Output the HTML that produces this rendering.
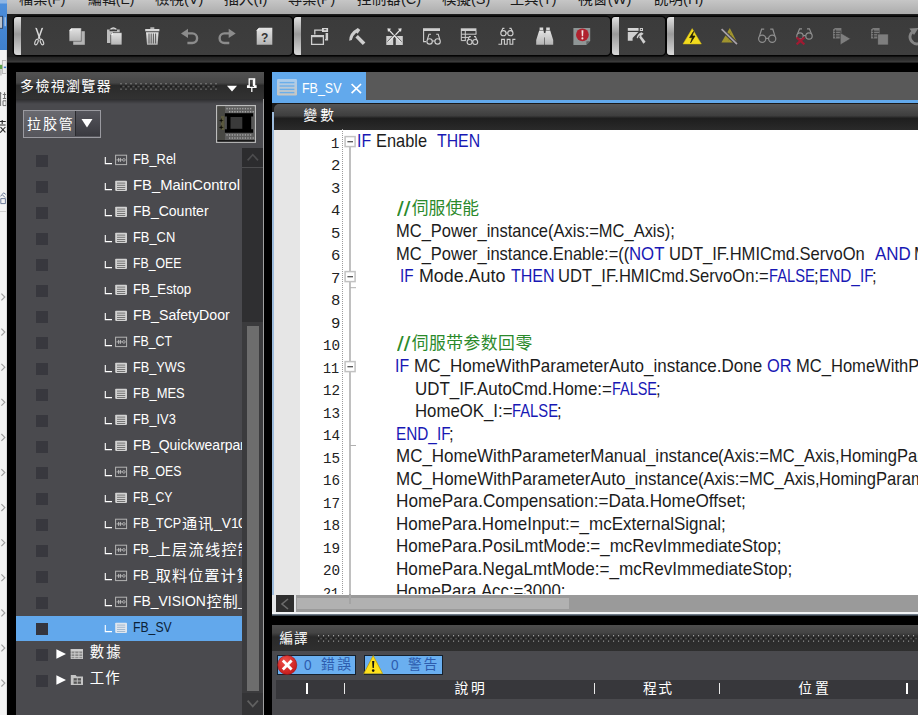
<!DOCTYPE html>
<html><head><meta charset="utf-8"><title>FB_SV</title>
<style>
html,body{margin:0;padding:0;background:#000;}
body{width:918px;height:715px;position:relative;overflow:hidden;font-family:"Liberation Sans","Noto Sans CJK TC",sans-serif;}
.a{position:absolute;}
.t{position:absolute;white-space:pre;display:block;}
.clip{position:absolute;left:0;top:0;width:918px;height:715px;}
.tb{position:absolute;top:17px;height:38px;background:linear-gradient(#3b3b3b,#3e3e3e);border-radius:4px;box-shadow:0 0 0 1.5px #040404;}
.grip{position:absolute;left:0;top:0;width:7px;height:38px;border-radius:3px 0 0 3px;background:linear-gradient(#e0e0e0,#9a9a9a 45%,#d8d8d8);}
.cb{position:absolute;left:36px;width:11px;height:11px;background:#333338;}
.ic{position:absolute;}
</style></head><body>
<!-- left strip of other window -->
<div class="a" style="left:0;top:0;width:7px;height:50px;background:linear-gradient(#4d8fdc,#3f80cc)"></div>
<div class="a" style="left:0;top:50px;width:7px;height:665px;background:#f3f3f3"></div>
<svg class="ic" style="left:0;top:0" width="8" height="715">
<rect x="0" y="0" width="7" height="3.5" fill="#8fb6e4"/>
<rect x="-1" y="16.3" width="3.6" height="12" fill="#b9c2cc" stroke="#2c4468" stroke-width="0.9"/>
<rect x="4.6" y="17.2" width="1.1" height="9" fill="#c9d6e6"/>
<rect x="2.4" y="60.5" width="4" height="13" fill="#ececec" stroke="#b4b4b4" stroke-width="0.9"/>
<rect x="0" y="64.8" width="2.2" height="4.4" fill="#5fa24a"/><rect x="3.8" y="66.6" width="2.6" height="1.5" fill="#3f78c6"/>
<rect x="0" y="69.5" width="1.8" height="6" fill="#c8c8c8"/>
<path d="M0 93.5 H1.4 M0.6 92 V106 M2.8 94.5 H6.4 M4.6 92.2 V98 M2.8 98.5 H6.4 M3 100.8 H6.2 V105.6 H3 Z" stroke="#707070" stroke-width="1" fill="none"/>
<path d="M0 121.5 H5.8 M2.2 120 V124 M0 125 H5.6 M0.5 127.2 L5.4 132.4 M5.4 127 L0.2 132.6" stroke="#2a2a2a" stroke-width="1.1" fill="none"/>
<path d="M0.5 196.4 L3.6 192.8 L5.8 194.4 M2.6 195 L5.2 197.6 M0.8 198.6 H5.4 V203.6 H0.8 Z" stroke="#5e6e90" stroke-width="0.9" fill="none"/>
<rect x="0" y="211" width="6.4" height="1" fill="#cfcfcf"/>
<path d="M1.4 293.6 L4.8 297 L1.4 300.4" stroke="#a0a0a0" stroke-width="1.2" fill="none"/>
<path d="M1.4 328.70000000000005 L4.8 332.1 L1.4 335.5" stroke="#a0a0a0" stroke-width="1.2" fill="none"/>
<path d="M1.4 363.80000000000007 L4.8 367.20000000000005 L1.4 370.6" stroke="#a0a0a0" stroke-width="1.2" fill="none"/>
<path d="M1.4 398.9000000000001 L4.8 402.30000000000007 L1.4 405.70000000000005" stroke="#a0a0a0" stroke-width="1.2" fill="none"/>
<path d="M1.4 434.0000000000001 L4.8 437.4000000000001 L1.4 440.80000000000007" stroke="#a0a0a0" stroke-width="1.2" fill="none"/>
<path d="M1.4 469.10000000000014 L4.8 472.5000000000001 L1.4 475.9000000000001" stroke="#a0a0a0" stroke-width="1.2" fill="none"/>
<path d="M1.4 504.20000000000016 L4.8 507.60000000000014 L1.4 511.0000000000001" stroke="#a0a0a0" stroke-width="1.2" fill="none"/>
<path d="M1.4 539.3000000000002 L4.8 542.7000000000002 L1.4 546.1000000000001" stroke="#a0a0a0" stroke-width="1.2" fill="none"/>
<path d="M1.4 574.4000000000002 L4.8 577.8000000000002 L1.4 581.2000000000002" stroke="#a0a0a0" stroke-width="1.2" fill="none"/>
<path d="M1.4 609.5000000000002 L4.8 612.9000000000002 L1.4 616.3000000000002" stroke="#a0a0a0" stroke-width="1.2" fill="none"/>
<path d="M1.4 644.6000000000003 L4.8 648.0000000000002 L1.4 651.4000000000002" stroke="#a0a0a0" stroke-width="1.2" fill="none"/>
<path d="M1.4 679.7000000000003 L4.8 683.1000000000003 L1.4 686.5000000000002" stroke="#a0a0a0" stroke-width="1.2" fill="none"/>
<rect x="6.2" y="50" width="0.8" height="665" fill="#d8d8d8"/>
</svg>
<!-- menu bar -->
<div class="a" style="left:7px;top:0;width:911px;height:13.5px;background:linear-gradient(#c6c6c6,#acacac)"></div>
<div class="clip" style="clip-path:inset(0 0 701.5px 7px)"><span class="t" style='left:19.34px;top:-12px;height:21px;line-height:21px;font-size:15px;color:#1a1a1a;transform:scaleX(0.9465);transform-origin:0 50%;'>檔案(F)</span>
<span class="t" style='left:88.28px;top:-12px;height:21px;line-height:21px;font-size:15px;color:#1a1a1a;transform:scaleX(0.9274);transform-origin:0 50%;'>編輯(E)</span>
<span class="t" style='left:155.32px;top:-12px;height:21px;line-height:21px;font-size:15px;color:#1a1a1a;transform:scaleX(0.9671);transform-origin:0 50%;'>檢視(V)</span>
<span class="t" style='left:224.31px;top:-12px;height:21px;line-height:21px;font-size:15px;color:#1a1a1a;transform:scaleX(0.9862);transform-origin:0 50%;'>插入(I)</span>
<span class="t" style='left:288.34px;top:-12px;height:21px;line-height:21px;font-size:15px;color:#1a1a1a;transform:scaleX(0.9465);transform-origin:0 50%;'>專案(P)</span>
<span class="t" style='left:357.29px;top:-12px;height:21px;line-height:21px;font-size:15px;color:#1a1a1a;transform:scaleX(0.9756);transform-origin:0 50%;'>控制器(C)</span>
<span class="t" style='left:442.32px;top:-12px;height:21px;line-height:21px;font-size:15px;color:#1a1a1a;transform:scaleX(0.9671);transform-origin:0 50%;'>模擬(S)</span>
<span class="t" style='left:510.34px;top:-12px;height:21px;line-height:21px;font-size:15px;color:#1a1a1a;transform:scaleX(0.9465);transform-origin:0 50%;'>工具(T)</span>
<span class="t" style='left:578.30px;top:-12px;height:21px;line-height:21px;font-size:15px;color:#1a1a1a;transform:scaleX(0.9890);transform-origin:0 50%;'>視窗(W)</span>
<span class="t" style='left:654.29px;top:-12px;height:21px;line-height:21px;font-size:15px;color:#1a1a1a;transform:scaleX(0.9684);transform-origin:0 50%;'>說明(H)</span></div>
<!-- toolbar zone -->
<div class="a" style="left:7px;top:13.5px;width:911px;height:43px;background:#1e1e1e"></div>
<div class="a" style="left:7px;top:56.6px;width:911px;height:6px;background:linear-gradient(#262626,#2e2e2e 50%,#3a3a3a 75%,#161616)"></div>
<div class="tb" style="left:14px;width:278px"><div class="grip"></div></div>
<div class="tb" style="left:294px;width:316px"><div class="grip"></div></div>
<div class="tb" style="left:612px;width:53px"><div class="grip"></div></div>
<div class="tb" style="left:667px;width:260px"><div class="grip"></div></div>
<svg class="ic" style="left:0;top:0" width="918" height="70" viewBox="0 0 918 70">
<defs>
<linearGradient id="lg" x1="0" y1="0" x2="0" y2="1"><stop offset="0" stop-color="#e4e4e4"/><stop offset="1" stop-color="#b4b4b4"/></linearGradient>
</defs>
<!-- scissors -->
<path d="M35.2 27.8 L36.9 27.9 L40.6 38.4 L39.2 39 Z" fill="#d8d8d8"/>
<path d="M43.2 27.8 L41.5 27.9 L37.8 38.4 L39.2 39 Z" fill="#d8d8d8"/>
<g stroke="#d2d2d2" fill="none" stroke-width="1.15">
<ellipse cx="36.5" cy="42" rx="1.45" ry="3" transform="rotate(22 36.5 42)"/>
<ellipse cx="41.9" cy="42" rx="1.45" ry="3" transform="rotate(-22 41.9 42)"/>
</g>
<!-- copy -->
<path d="M73.2 31.2 H84.8 V44.8 H73.2 Z" fill="#b4b4b4"/>
<path d="M71.8 27.9 H81.3 V41.3 H69.1 V30.6 Z" fill="url(#lg)" stroke="#3b3b3b" stroke-width="0.5"/>
<path d="M69.1 30.6 L71.8 30.6 L71.8 27.9 Z" fill="#fafafa"/>
<!-- paste -->
<path d="M107 29.5 H119.7 V43 H107 Z" fill="#bdbdbd"/>
<path d="M110.5 29.3 Q113.3 26.6 116.3 29.3" stroke="#d8d8d8" stroke-width="1.3" fill="none"/>
<path d="M109.6 29.8 H117 V31.2 H109.6 Z" fill="#3b3b3b"/>
<path d="M113 32.6 H122 V45 H110.7 V35 Z" fill="url(#lg)" stroke="#3b3b3b" stroke-width="0.7"/>
<path d="M110.7 35 L113 35 L113 32.6 Z" fill="#f4f4f4"/>
<!-- trash -->
<path d="M150.3 27.4 H154.3 V28.8 H150.3 Z" fill="#d0d0d0"/>
<path d="M145.2 29 H159.4 V31.3 H145.2 Z" fill="#d8d8d8"/>
<path d="M146 32.3 H158.6 L157.6 44.8 H147 Z" fill="url(#lg)"/>
<g stroke="#4a4a4a" stroke-width="0.9"><path d="M149 33.5 V43.5"/><path d="M151.2 33.5 V43.5"/><path d="M153.4 33.5 V43.5"/><path d="M155.6 33.5 V43.5"/></g>
<!-- undo -->
<path d="M187 33.4 H192.3 A4.8 4.8 0 0 1 192.3 43 H187.4" fill="none" stroke="#8c8c8c" stroke-width="2.4"/>
<path d="M181 33.4 L188 28.7 V38.1 Z" fill="#8c8c8c"/>
<!-- redo -->
<path d="M229.7 33.4 H224.4 A4.8 4.8 0 0 0 224.4 43 H229.3" fill="none" stroke="#8c8c8c" stroke-width="2.4"/>
<path d="M235.7 33.4 L228.7 28.7 V38.1 Z" fill="#8c8c8c"/>
<!-- help page -->
<path d="M259.2 27.8 H272.3 V44.8 H256.7 V30.3 Z" fill="url(#lg)"/>
<path d="M256.7 30.3 L259.2 30.3 L259.2 27.8 Z" fill="#f8f8f8"/>
<text x="264.6" y="41.6" font-family="Liberation Sans, sans-serif" font-weight="bold" font-size="12" fill="#333" text-anchor="middle">?</text>
<!-- windows icon -->
<path d="M311.6 35.6 H323.4 V44.4 H311.6 Z" fill="none" stroke="#cfcfcf" stroke-width="1.3"/>
<path d="M311 35 H324 V37.2 H311 Z" fill="#cfcfcf"/>
<path d="M314.8 34.4 V30.2 H322" fill="none" stroke="#cfcfcf" stroke-width="1.3"/>
<path d="M322 28 H328.1 V32 H322 Z" fill="#d6d6d6"/><path d="M323.8 29.2 H326.4 V30.2 H323.8 Z" fill="#444"/>
<path d="M325.6 33 H328.1 V40.4 H325 V39 H325.6 Z" fill="#cfcfcf"/>
<!-- hammer -->
<path d="M349.2 40.8 Q348.8 33 357.8 28 L360.3 29.9 L357.6 33.8 L356.2 32.8 Q352.6 35.8 351.8 40 Z" fill="#cfcfcf"/>
<path d="M355.4 37.4 L357.9 35 L365.4 42.4 L362.8 45 Z" fill="#cfcfcf"/>
<!-- cross arrows -->
<path d="M386.3 36 H393.2 V45 H386.3 Z M395.8 36 H402.8 V45 H395.8 Z" fill="#cfcfcf"/>
<g stroke="#e2e2e2" stroke-width="1.3" fill="none"><path d="M388.5 29.5 L400.5 42"/><path d="M400.5 29.5 L388.5 42"/></g>
<g stroke="#3b3b3b" stroke-width="0.7" fill="none"><path d="M389.8 29.2 L401.6 41.6"/><path d="M399.2 29.2 L387.4 41.6"/></g>
<path d="M387.4 28.2 L391.2 28.8 L388 32 Z M401.6 28.2 L397.8 28.8 L401 32 Z" fill="#e2e2e2"/>
<!-- window + glasses -->
<path d="M423 28.2 H440 V31 H423 Z" fill="#cfcfcf"/>
<path d="M423.6 31 V41.6 H426" stroke="#cfcfcf" stroke-width="1.1" fill="none"/>
<g fill="none" stroke="#cfcfcf" stroke-width="1.1"><circle cx="429.6" cy="41.4" r="2.7"/><circle cx="437.6" cy="41.4" r="2.7"/><path d="M432.3 41 H434.9"/><path d="M427.4 39.5 L429 34.2 H431"/><path d="M439.8 39.5 L438.2 34.2 H436.2"/></g>
<!-- table + glasses -->
<path d="M460.8 28.3 H476.4 V31 H460.8 Z" fill="#cfcfcf"/>
<g stroke="#cfcfcf" stroke-width="1" fill="none"><path d="M461.3 31 V40.6 H465.8"/><path d="M461.3 34.2 H476.4"/><path d="M461.3 37.4 H469"/><path d="M465.3 31 V40.6"/><path d="M476 31 V34.2"/></g>
<g fill="none" stroke="#cfcfcf" stroke-width="1.1"><circle cx="469.6" cy="42" r="2.5"/><circle cx="475.2" cy="42" r="2.5"/><path d="M468 40 L469.4 36.6 H470.8"/><path d="M476.8 40 L475.4 36.6 H474"/></g>
<!-- glasses + wave -->
<g fill="none" stroke="#cfcfcf" stroke-width="1.1"><circle cx="503.4" cy="33.2" r="2.6"/><circle cx="510.4" cy="33.2" r="2.6"/><path d="M506 33 H507.8"/><path d="M501.4 31.4 L502.8 28.4 H504.4"/><path d="M512.4 31.4 L511 28.4 H509.4"/>
<path d="M498.4 44.2 H501.6 V39.4 H504.4 V44.2 H507.2 V39.4 H510 V44.2 H512.8 V39.4 H515.4"/></g>
<!-- binoculars -->
<path d="M539.6 27.6 H543.2 V30 H539.6 Z M546.2 27.6 H549.8 V30 H546.2 Z" fill="#d8d8d8"/>
<path d="M539.2 30.6 H543.6 L544.4 36 V44.8 H536.2 V40 Z M545.8 30.6 H550.2 L553.2 40 V44.8 H545 V36 Z" fill="url(#lg)"/>
<path d="M543.4 33 H546 V37.4 H543.4 Z" fill="#d0d0d0"/>
<!-- error page -->
<path d="M573.4 28 H590.2 V41 L586.4 45 H573.4 Z" fill="#8f9696"/>
<path d="M586.4 45 V41.2 H590.2 Z" fill="#5e6464"/>
<circle cx="582.4" cy="34.8" r="6.4" fill="#b0222e"/>
<path d="M581.5 30.2 H583.4 L583.1 36.2 H581.8 Z" fill="#f2e6e6"/><circle cx="582.4" cy="38.4" r="1.05" fill="#f2e6e6"/>
<!-- build window -->
<path d="M627.8 28 H638.6 V30.8 H627.8 Z" fill="#d6d6d6"/>
<path d="M627.8 32 H638.4 L632.6 38 V40.8 H627.8 Z" fill="#cfcfcf"/>
<path d="M639.8 28 H643 V31 H639.8 Z" fill="#cfcfcf"/><path d="M640.8 29 H642 V30 H640.8 Z" fill="#3b3b3b"/>
<path d="M636.6 37.6 Q637.8 33.6 641.6 32.2 L643.6 33.8 L640.6 36.2 L639.6 35.6 Q638.2 36.6 637.8 38.6 Z" fill="#cfcfcf"/>
<path d="M639 37 L640.8 35.4 L645.6 41.8 L643.4 43.8 Z" fill="#cfcfcf"/>
<!-- yellow warning bolt -->
<path d="M692.2 28.6 L701.4 44 H683 Z" fill="#f2dc1e" stroke="#d0b416" stroke-width="0.5" stroke-linejoin="round"/>
<path d="M693.6 31.4 L689.6 37.6 H692.4 L690.6 42.8 L695 36 H692.2 Z" fill="#1c1a08" stroke="#1c1a08" stroke-width="0.7"/>
<!-- dim warning slashed -->
<path d="M729.8 28 L737.2 42.6 H721.4 Z" fill="#a0942e"/>
<path d="M730.6 31.4 L727.6 36.6 H729.8 L728.4 41 L731.8 35.4 H729.6 Z" fill="#6e6620"/>
<path d="M721.6 29.2 L737 44.1" stroke="#3b3b3b" stroke-width="3.6"/>
<path d="M721.6 29.2 L737 44.1" stroke="#a8a2aa" stroke-width="1.7"/>
<!-- glasses gray -->
<g fill="none" stroke="#8e8e8e" stroke-width="1.2"><circle cx="762.2" cy="38.8" r="3.6"/><circle cx="772.2" cy="38.8" r="3.6"/><path d="M765.8 38.4 H768.6"/><path d="M759.4 36.4 L761.6 29.2 H764.2"/><path d="M775 36.4 L772.8 29.2 H770.2"/></g>
<!-- glasses w/ red x -->
<g fill="none" stroke="#8e8e8e" stroke-width="1.2"><circle cx="800" cy="36" r="3.2"/><circle cx="809" cy="36" r="3.2"/><path d="M803.2 35.6 H805.8"/><path d="M797.6 33.8 L799.6 28.8 H802"/><path d="M811.4 33.8 L809.4 28.8 H807"/></g>
<path d="M796.6 37.4 L804.4 44.4 M804.4 37.4 L796.6 44.4" stroke="#a01a32" stroke-width="2.2"/>
<!-- play with doc -->
<path d="M833 29.6 L835 28 H841.4 V38.4 H833 Z" fill="#7a7a7a"/>
<g stroke="#3b3b3b" stroke-width="0.9"><path d="M833.6 31.2 H841 M833.6 33.6 H841 M833.6 36 H841 M835.6 29.6 V38.4"/></g>
<path d="M840.2 32.6 L850.6 38.8 L840.2 45 Z" fill="#7e7e7e" stroke="#3b3b3b" stroke-width="0.7"/>
<!-- stop with doc -->
<path d="M871 29.6 L873 28 H879.6 V38.4 H871 Z" fill="#7a7a7a"/>
<g stroke="#3b3b3b" stroke-width="0.9"><path d="M871.6 31.2 H879.2 M871.6 33.6 H879.2 M871.6 36 H879.2 M873.6 29.6 V38.4"/></g>
<path d="M877.6 34 H888.4 V45 H877.6 Z" fill="#7e7e7e" stroke="#3b3b3b" stroke-width="0.7"/>
<!-- refresh -->
<path d="M912.4 31.8 A6.9 6.9 0 0 0 919.5 43.4" fill="none" stroke="#858585" stroke-width="3"/>
<path d="M909.4 28.4 L918.4 28 L914 35 Z" fill="#858585"/>
</svg>

<!-- left panel -->
<div class="a" style="left:16px;top:72px;width:248px;height:27px;background:linear-gradient(#525252,#464646 40%,#2a2a2a 50%,#323232)"></div>
<div class="a" style="left:16px;top:99px;width:248px;height:616px;background:linear-gradient(#2c2c2e,#4a4a4e 5px)"></div>
<svg class="ic" style="left:120px;top:83px" width="97" height="6.9"><defs><pattern id="d1" width="5" height="5.6" patternUnits="userSpaceOnUse"><rect x="0" y="0" width="2" height="1.3" fill="#6c6c6c"/><rect x="2.5" y="2.8" width="2" height="1.3" fill="#5c5c5c"/><rect x="0" y="2.8" width="2" height="1.3" fill="#1c1c1c"/></pattern></defs><rect width="97" height="6.9" fill="url(#d1)"/></svg>
<svg class="ic" style="left:226px;top:85px" width="12" height="8"><path d="M1 0.8 L11 0.8 L6 6.4 Z" fill="#fff"/></svg>
<svg class="ic" style="left:246px;top:78px" width="12" height="15"><path d="M3.2 1 H8.6 V8 H10 V9.4 H1.6 V8 H3.2 Z" fill="none" stroke="#fff" stroke-width="1.3"/><path d="M7.6 1.4 V8" stroke="#fff" stroke-width="1.6"/><path d="M5.8 9.4 V14" stroke="#fff" stroke-width="1.3"/></svg>

<!-- dropdown -->
<div class="a" style="left:23px;top:110px;width:77.5px;height:27.5px;background:linear-gradient(#6a6a70,#55555b);box-shadow:inset 0 0 0 1px #9a9aa0"></div>
<div class="a" style="left:75px;top:111px;width:24px;height:25px;background:linear-gradient(#55555c,#3a3a40);border-left:1px solid #2a2a2e"></div>
<svg class="ic" style="left:81px;top:118px" width="12" height="10"><path d="M0.5 1 L11.5 1 L6 9.5 Z" fill="#fff"/></svg>

<svg class="ic" style="left:216px;top:105px" width="41" height="39" viewBox="0 0 41 39">
<rect x="0.65" y="0.65" width="38.7" height="36.6" fill="#505052" stroke="#bcbcbc" stroke-width="1.3"/>
<rect x="1.3" y="1.3" width="7.7" height="34" fill="#484844"/>
<rect x="5" y="11" width="3.4" height="14" fill="#6c6838" opacity="0.5"/>
<rect x="9" y="1.6" width="29.5" height="6.8" fill="#5e5e5e"/>
<rect x="10.40" y="2.9" width="1.3" height="1.5" fill="#a4a4a4"/><rect x="13.02" y="2.9" width="1.3" height="1.5" fill="#a4a4a4"/><rect x="15.64" y="2.9" width="1.3" height="1.5" fill="#a4a4a4"/><rect x="18.26" y="2.9" width="1.3" height="1.5" fill="#a4a4a4"/><rect x="20.88" y="2.9" width="1.3" height="1.5" fill="#a4a4a4"/><rect x="23.50" y="2.9" width="1.3" height="1.5" fill="#a4a4a4"/><rect x="26.12" y="2.9" width="1.3" height="1.5" fill="#a4a4a4"/><rect x="28.74" y="2.9" width="1.3" height="1.5" fill="#a4a4a4"/><rect x="31.36" y="2.9" width="1.3" height="1.5" fill="#a4a4a4"/><rect x="33.98" y="2.9" width="1.3" height="1.5" fill="#a4a4a4"/><rect x="13.00" y="6.0" width="1.3" height="1.5" fill="#a4a4a4"/><rect x="15.62" y="6.0" width="1.3" height="1.5" fill="#a4a4a4"/><rect x="18.24" y="6.0" width="1.3" height="1.5" fill="#a4a4a4"/><rect x="20.86" y="6.0" width="1.3" height="1.5" fill="#a4a4a4"/><rect x="23.48" y="6.0" width="1.3" height="1.5" fill="#a4a4a4"/><rect x="26.10" y="6.0" width="1.3" height="1.5" fill="#a4a4a4"/><rect x="28.72" y="6.0" width="1.3" height="1.5" fill="#a4a4a4"/><rect x="31.34" y="6.0" width="1.3" height="1.5" fill="#a4a4a4"/><rect x="33.96" y="6.0" width="1.3" height="1.5" fill="#a4a4a4"/><rect x="36.58" y="6.0" width="1.3" height="1.5" fill="#a4a4a4"/>
<rect x="9" y="27.6" width="29.5" height="7.6" fill="#5e5e5e"/>
<rect x="10.40" y="29.2" width="1.3" height="1.5" fill="#a4a4a4"/><rect x="13.02" y="29.2" width="1.3" height="1.5" fill="#a4a4a4"/><rect x="15.64" y="29.2" width="1.3" height="1.5" fill="#a4a4a4"/><rect x="18.26" y="29.2" width="1.3" height="1.5" fill="#a4a4a4"/><rect x="20.88" y="29.2" width="1.3" height="1.5" fill="#a4a4a4"/><rect x="23.50" y="29.2" width="1.3" height="1.5" fill="#a4a4a4"/><rect x="26.12" y="29.2" width="1.3" height="1.5" fill="#a4a4a4"/><rect x="28.74" y="29.2" width="1.3" height="1.5" fill="#a4a4a4"/><rect x="31.36" y="29.2" width="1.3" height="1.5" fill="#a4a4a4"/><rect x="33.98" y="29.2" width="1.3" height="1.5" fill="#a4a4a4"/><rect x="13.00" y="32.3" width="1.3" height="1.5" fill="#a4a4a4"/><rect x="15.62" y="32.3" width="1.3" height="1.5" fill="#a4a4a4"/><rect x="18.24" y="32.3" width="1.3" height="1.5" fill="#a4a4a4"/><rect x="20.86" y="32.3" width="1.3" height="1.5" fill="#a4a4a4"/><rect x="23.48" y="32.3" width="1.3" height="1.5" fill="#a4a4a4"/><rect x="26.10" y="32.3" width="1.3" height="1.5" fill="#a4a4a4"/><rect x="28.72" y="32.3" width="1.3" height="1.5" fill="#a4a4a4"/><rect x="31.34" y="32.3" width="1.3" height="1.5" fill="#a4a4a4"/><rect x="33.96" y="32.3" width="1.3" height="1.5" fill="#a4a4a4"/><rect x="36.58" y="32.3" width="1.3" height="1.5" fill="#a4a4a4"/>
<rect x="35" y="11.4" width="3.5" height="13" fill="#585858"/>
<path d="M8.9 8.2 H37 V11.4 H35.2 V24.3 H37 V27.8 H8.9 V24.3 H10.9 V11.4 H8.9 Z" fill="#000"/>
<rect x="14.5" y="12" width="11.8" height="11.8" fill="#3a3a3a"/>
<rect x="1.3" y="35.2" width="37.4" height="1.4" fill="#0a0a0a"/>
<path d="M5.2 13.0 L5.8 14.9 L7.7 15.5 L5.8 16.1 L5.2 18.0 L4.6000000000000005 16.1 L2.7 15.5 L4.6000000000000005 14.9 Z" fill="#0c0c06"/><path d="M5.2 19.8 L5.8 21.7 L7.7 22.3 L5.8 22.900000000000002 L5.2 24.8 L4.6000000000000005 22.900000000000002 L2.7 22.3 L4.6000000000000005 21.7 Z" fill="#0c0c06"/>
</svg>

<!-- tree -->
<div class="a" style="left:16px;top:616px;width:226px;height:25px;background:#62a8ec"></div>
<div class="a" style="left:36px;top:155px;width:12px;height:12px;background:#38383e"></div>
<div class="a" style="left:36px;top:181px;width:12px;height:12px;background:#38383e"></div>
<div class="a" style="left:36px;top:207px;width:12px;height:12px;background:#38383e"></div>
<div class="a" style="left:36px;top:233px;width:12px;height:12px;background:#38383e"></div>
<div class="a" style="left:36px;top:259px;width:12px;height:12px;background:#38383e"></div>
<div class="a" style="left:36px;top:285px;width:12px;height:12px;background:#38383e"></div>
<div class="a" style="left:36px;top:311px;width:12px;height:12px;background:#38383e"></div>
<div class="a" style="left:36px;top:337px;width:12px;height:12px;background:#38383e"></div>
<div class="a" style="left:36px;top:363px;width:12px;height:12px;background:#38383e"></div>
<div class="a" style="left:36px;top:389px;width:12px;height:12px;background:#38383e"></div>
<div class="a" style="left:36px;top:415px;width:12px;height:12px;background:#38383e"></div>
<div class="a" style="left:36px;top:441px;width:12px;height:12px;background:#38383e"></div>
<div class="a" style="left:36px;top:467px;width:12px;height:12px;background:#38383e"></div>
<div class="a" style="left:36px;top:493px;width:12px;height:12px;background:#38383e"></div>
<div class="a" style="left:36px;top:519px;width:12px;height:12px;background:#38383e"></div>
<div class="a" style="left:36px;top:545px;width:12px;height:12px;background:#38383e"></div>
<div class="a" style="left:36px;top:571px;width:12px;height:12px;background:#38383e"></div>
<div class="a" style="left:36px;top:597px;width:12px;height:12px;background:#38383e"></div>
<div class="a" style="left:36px;top:623px;width:12px;height:12px;background:#34353e"></div>
<div class="a" style="left:36px;top:649px;width:12px;height:12px;background:#38383e"></div>
<div class="a" style="left:36px;top:675px;width:12px;height:12px;background:#38383e"></div>
<div class="clip" style="clip-path:inset(146px 676px 0 16px)"><span class="t" style='left:132.82px;top:147.6px;height:22px;line-height:22px;font-size:15.5px;color:#fff;transform:scaleX(0.8300);transform-origin:0 50%;font-family:"Liberation Sans","Noto Sans CJK SC",sans-serif;'>FB_Rel</span>
<span class="t" style='left:132.73px;top:173.6px;height:22px;line-height:22px;font-size:15.5px;color:#fff;transform:scaleX(0.9548);transform-origin:0 50%;font-family:"Liberation Sans","Noto Sans CJK SC",sans-serif;'>FB_MainControl</span>
<span class="t" style='left:132.77px;top:199.6px;height:22px;line-height:22px;font-size:15.5px;color:#fff;transform:scaleX(0.9043);transform-origin:0 50%;font-family:"Liberation Sans","Noto Sans CJK SC",sans-serif;'>FB_Counter</span>
<span class="t" style='left:132.82px;top:225.6px;height:22px;line-height:22px;font-size:15.5px;color:#fff;transform:scaleX(0.8306);transform-origin:0 50%;font-family:"Liberation Sans","Noto Sans CJK SC",sans-serif;'>FB_CN</span>
<span class="t" style='left:132.85px;top:251.6px;height:22px;line-height:22px;font-size:15.5px;color:#fff;transform:scaleX(0.7921);transform-origin:0 50%;font-family:"Liberation Sans","Noto Sans CJK SC",sans-serif;'>FB_OEE</span>
<span class="t" style='left:132.80px;top:277.6px;height:22px;line-height:22px;font-size:15.5px;color:#fff;transform:scaleX(0.8550);transform-origin:0 50%;font-family:"Liberation Sans","Noto Sans CJK SC",sans-serif;'>FB_Estop</span>
<span class="t" style='left:132.76px;top:303.6px;height:22px;line-height:22px;font-size:15.5px;color:#fff;transform:scaleX(0.9129);transform-origin:0 50%;font-family:"Liberation Sans","Noto Sans CJK SC",sans-serif;'>FB_SafetyDoor</span>
<span class="t" style='left:132.84px;top:329.6px;height:22px;line-height:22px;font-size:15.5px;color:#fff;transform:scaleX(0.7942);transform-origin:0 50%;font-family:"Liberation Sans","Noto Sans CJK SC",sans-serif;'>FB_CT</span>
<span class="t" style='left:132.83px;top:355.6px;height:22px;line-height:22px;font-size:15.5px;color:#fff;transform:scaleX(0.8211);transform-origin:0 50%;font-family:"Liberation Sans","Noto Sans CJK SC",sans-serif;'>FB_YWS</span>
<span class="t" style='left:132.82px;top:381.6px;height:22px;line-height:22px;font-size:15.5px;color:#fff;transform:scaleX(0.8344);transform-origin:0 50%;font-family:"Liberation Sans","Noto Sans CJK SC",sans-serif;'>FB_MES</span>
<span class="t" style='left:132.82px;top:407.6px;height:22px;line-height:22px;font-size:15.5px;color:#fff;transform:scaleX(0.8281);transform-origin:0 50%;font-family:"Liberation Sans","Noto Sans CJK SC",sans-serif;'>FB_IV3</span>
<span class="t" style='left:132.85px;top:459.6px;height:22px;line-height:22px;font-size:15.5px;color:#fff;transform:scaleX(0.7921);transform-origin:0 50%;font-family:"Liberation Sans","Noto Sans CJK SC",sans-serif;'>FB_OES</span>
<span class="t" style='left:132.85px;top:485.6px;height:22px;line-height:22px;font-size:15.5px;color:#fff;transform:scaleX(0.7881);transform-origin:0 50%;font-family:"Liberation Sans","Noto Sans CJK SC",sans-serif;'>FB_CY</span>
<span class="t" style='left:132.85px;top:615.6px;height:22px;line-height:22px;font-size:15.5px;color:#0c2238;transform:scaleX(0.7881);transform-origin:0 50%;font-family:"Liberation Sans","Noto Sans CJK SC",sans-serif;'>FB_SV</span>
<span class="t" style='left:132.87px;top:433.6px;height:22px;line-height:22px;font-size:15.5px;color:#fff;transform:scaleX(0.9034);transform-origin:0 50%;font-family:"Liberation Sans","Noto Sans CJK SC",sans-serif;'>FB_Quickwearpa</span>
<span class="t" style='left:240.24px;top:433.6px;height:22px;line-height:22px;font-size:15.5px;color:#fff;transform:scaleX(0.9479);transform-origin:0 50%;font-family:"Liberation Sans","Noto Sans CJK SC",sans-serif;'>rt</span>
<span class="t" style='left:132.93px;top:511.6px;height:22px;line-height:22px;font-size:15.5px;color:#fff;transform:scaleX(0.8093);transform-origin:0 50%;font-family:"Liberation Sans","Noto Sans CJK SC",sans-serif;'>FB_TCP</span>
<span class="t" style='left:181.90px;top:512.7px;height:21px;line-height:21px;font-size:15.2px;color:#fff;letter-spacing:0.812px;font-family:"Liberation Sans","Noto Sans CJK SC",sans-serif;'>通讯</span>
<span class="t" style='left:213.87px;top:511.6px;height:22px;line-height:22px;font-size:15.5px;color:#fff;transform:scaleX(0.8915);transform-origin:0 50%;font-family:"Liberation Sans","Noto Sans CJK SC",sans-serif;'>_V1</span>
<span class="t" style='left:238.49px;top:511.6px;height:22px;line-height:22px;font-size:15.5px;color:#fff;transform:scaleX(0.9535);transform-origin:0 50%;font-family:"Liberation Sans","Noto Sans CJK SC",sans-serif;'>0</span>
<span class="t" style='left:132.94px;top:537.6px;height:22px;line-height:22px;font-size:15.5px;color:#fff;transform:scaleX(0.8053);transform-origin:0 50%;font-family:"Liberation Sans","Noto Sans CJK SC",sans-serif;'>FB_</span>
<span class="t" style='left:155.70px;top:538.7px;height:21px;line-height:21px;font-size:15.2px;color:#fff;letter-spacing:1.240px;font-family:"Liberation Sans","Noto Sans CJK SC",sans-serif;'>上层流线控制</span>
<span class="t" style='left:132.94px;top:563.6px;height:22px;line-height:22px;font-size:15.5px;color:#fff;transform:scaleX(0.8053);transform-origin:0 50%;font-family:"Liberation Sans","Noto Sans CJK SC",sans-serif;'>FB_</span>
<span class="t" style='left:155.70px;top:564.7px;height:21px;line-height:21px;font-size:15.2px;color:#fff;letter-spacing:1.040px;font-family:"Liberation Sans","Noto Sans CJK SC",sans-serif;'>取料位置计算</span>
<span class="t" style='left:132.87px;top:589.6px;height:22px;line-height:22px;font-size:15.5px;color:#fff;transform:scaleX(0.8991);transform-origin:0 50%;font-family:"Liberation Sans","Noto Sans CJK SC",sans-serif;'>FB_VISION</span>
<span class="t" style='left:206.60px;top:590.7px;height:21px;line-height:21px;font-size:15.2px;color:#fff;letter-spacing:0.762px;font-family:"Liberation Sans","Noto Sans CJK SC",sans-serif;'>控制</span>
<span class="t" style='left:238.46px;top:589.6px;height:22px;line-height:22px;font-size:15.5px;color:#fff;transform:scaleX(0.8646);transform-origin:0 50%;font-family:"Liberation Sans","Noto Sans CJK SC",sans-serif;'>_</span>
<span class="t" style='left:89.80px;top:642.3px;height:20px;line-height:20px;font-size:14.4px;color:#fff;letter-spacing:2.100px;'>數據</span>
<span class="t" style='left:89.80px;top:668.3px;height:20px;line-height:20px;font-size:14.4px;color:#fff;letter-spacing:1.100px;'>工作</span><svg class="ic" style="left:0;top:0" width="918" height="715">
<path d="M105.3 157 V163.6 H112" stroke="#fff" stroke-width="1.1" fill="none"/>
<rect x="115.6" y="155.2" width="11" height="9.4" fill="none" stroke="#b4b4b4" stroke-width="1"/>
<path d="M116.5 159.89999999999998 H122.6 M118.6 157.89999999999998 V161.89999999999998 M120.4 157.89999999999998 V161.89999999999998" stroke="#c0c0c0" stroke-width="0.9" fill="none"/>
<circle cx="123.9" cy="159.89999999999998" r="1.3" fill="none" stroke="#c0c0c0" stroke-width="0.8"/>
<path d="M105.3 183 V189.6 H112" stroke="#fff" stroke-width="1.1" fill="none"/>
<rect x="115.2" y="180.7" width="11.8" height="10.2" rx="0.8" fill="#d2d2d2"/>
<path d="M117 183.1 H125.2 M117 185.29999999999998 H125.2 M117 187.5 H125.2 M117 189.5 H125.2" stroke="#6a6a6a" stroke-width="0.9"/>
<path d="M105.3 209 V215.6 H112" stroke="#fff" stroke-width="1.1" fill="none"/>
<rect x="115.2" y="206.7" width="11.8" height="10.2" rx="0.8" fill="#d2d2d2"/>
<path d="M117 209.1 H125.2 M117 211.29999999999998 H125.2 M117 213.5 H125.2 M117 215.5 H125.2" stroke="#6a6a6a" stroke-width="0.9"/>
<path d="M105.3 235 V241.6 H112" stroke="#fff" stroke-width="1.1" fill="none"/>
<rect x="115.2" y="232.7" width="11.8" height="10.2" rx="0.8" fill="#d2d2d2"/>
<path d="M117 235.1 H125.2 M117 237.29999999999998 H125.2 M117 239.5 H125.2 M117 241.5 H125.2" stroke="#6a6a6a" stroke-width="0.9"/>
<path d="M105.3 261 V267.6 H112" stroke="#fff" stroke-width="1.1" fill="none"/>
<rect x="115.2" y="258.7" width="11.8" height="10.2" rx="0.8" fill="#d2d2d2"/>
<path d="M117 261.09999999999997 H125.2 M117 263.3 H125.2 M117 265.5 H125.2 M117 267.5 H125.2" stroke="#6a6a6a" stroke-width="0.9"/>
<path d="M105.3 287 V293.6 H112" stroke="#fff" stroke-width="1.1" fill="none"/>
<rect x="115.2" y="284.7" width="11.8" height="10.2" rx="0.8" fill="#d2d2d2"/>
<path d="M117 287.09999999999997 H125.2 M117 289.3 H125.2 M117 291.5 H125.2 M117 293.5 H125.2" stroke="#6a6a6a" stroke-width="0.9"/>
<path d="M105.3 313 V319.6 H112" stroke="#fff" stroke-width="1.1" fill="none"/>
<rect x="115.2" y="310.7" width="11.8" height="10.2" rx="0.8" fill="#d2d2d2"/>
<path d="M117 313.09999999999997 H125.2 M117 315.3 H125.2 M117 317.5 H125.2 M117 319.5 H125.2" stroke="#6a6a6a" stroke-width="0.9"/>
<path d="M105.3 339 V345.6 H112" stroke="#fff" stroke-width="1.1" fill="none"/>
<rect x="115.6" y="337.2" width="11" height="9.4" fill="none" stroke="#b4b4b4" stroke-width="1"/>
<path d="M116.5 341.9 H122.6 M118.6 339.9 V343.9 M120.4 339.9 V343.9" stroke="#c0c0c0" stroke-width="0.9" fill="none"/>
<circle cx="123.9" cy="341.9" r="1.3" fill="none" stroke="#c0c0c0" stroke-width="0.8"/>
<path d="M105.3 365 V371.6 H112" stroke="#fff" stroke-width="1.1" fill="none"/>
<rect x="115.2" y="362.7" width="11.8" height="10.2" rx="0.8" fill="#d2d2d2"/>
<path d="M117 365.09999999999997 H125.2 M117 367.3 H125.2 M117 369.5 H125.2 M117 371.5 H125.2" stroke="#6a6a6a" stroke-width="0.9"/>
<path d="M105.3 391 V397.6 H112" stroke="#fff" stroke-width="1.1" fill="none"/>
<rect x="115.2" y="388.7" width="11.8" height="10.2" rx="0.8" fill="#d2d2d2"/>
<path d="M117 391.09999999999997 H125.2 M117 393.3 H125.2 M117 395.5 H125.2 M117 397.5 H125.2" stroke="#6a6a6a" stroke-width="0.9"/>
<path d="M105.3 417 V423.6 H112" stroke="#fff" stroke-width="1.1" fill="none"/>
<rect x="115.2" y="414.7" width="11.8" height="10.2" rx="0.8" fill="#d2d2d2"/>
<path d="M117 417.09999999999997 H125.2 M117 419.3 H125.2 M117 421.5 H125.2 M117 423.5 H125.2" stroke="#6a6a6a" stroke-width="0.9"/>
<path d="M105.3 443 V449.6 H112" stroke="#fff" stroke-width="1.1" fill="none"/>
<rect x="115.2" y="440.7" width="11.8" height="10.2" rx="0.8" fill="#d2d2d2"/>
<path d="M117 443.09999999999997 H125.2 M117 445.3 H125.2 M117 447.5 H125.2 M117 449.5 H125.2" stroke="#6a6a6a" stroke-width="0.9"/>
<path d="M105.3 469 V475.6 H112" stroke="#fff" stroke-width="1.1" fill="none"/>
<rect x="115.6" y="467.2" width="11" height="9.4" fill="none" stroke="#b4b4b4" stroke-width="1"/>
<path d="M116.5 471.9 H122.6 M118.6 469.9 V473.9 M120.4 469.9 V473.9" stroke="#c0c0c0" stroke-width="0.9" fill="none"/>
<circle cx="123.9" cy="471.9" r="1.3" fill="none" stroke="#c0c0c0" stroke-width="0.8"/>
<path d="M105.3 495 V501.6 H112" stroke="#fff" stroke-width="1.1" fill="none"/>
<rect x="115.2" y="492.7" width="11.8" height="10.2" rx="0.8" fill="#d2d2d2"/>
<path d="M117 495.09999999999997 H125.2 M117 497.3 H125.2 M117 499.5 H125.2 M117 501.5 H125.2" stroke="#6a6a6a" stroke-width="0.9"/>
<path d="M105.3 521 V527.6 H112" stroke="#fff" stroke-width="1.1" fill="none"/>
<rect x="115.6" y="519.2" width="11" height="9.4" fill="none" stroke="#b4b4b4" stroke-width="1"/>
<path d="M116.5 523.9000000000001 H122.6 M118.6 521.9000000000001 V525.9000000000001 M120.4 521.9000000000001 V525.9000000000001" stroke="#c0c0c0" stroke-width="0.9" fill="none"/>
<circle cx="123.9" cy="523.9000000000001" r="1.3" fill="none" stroke="#c0c0c0" stroke-width="0.8"/>
<path d="M105.3 547 V553.6 H112" stroke="#fff" stroke-width="1.1" fill="none"/>
<rect x="115.6" y="545.2" width="11" height="9.4" fill="none" stroke="#b4b4b4" stroke-width="1"/>
<path d="M116.5 549.9000000000001 H122.6 M118.6 547.9000000000001 V551.9000000000001 M120.4 547.9000000000001 V551.9000000000001" stroke="#c0c0c0" stroke-width="0.9" fill="none"/>
<circle cx="123.9" cy="549.9000000000001" r="1.3" fill="none" stroke="#c0c0c0" stroke-width="0.8"/>
<path d="M105.3 573 V579.6 H112" stroke="#fff" stroke-width="1.1" fill="none"/>
<rect x="115.6" y="571.2" width="11" height="9.4" fill="none" stroke="#b4b4b4" stroke-width="1"/>
<path d="M116.5 575.9000000000001 H122.6 M118.6 573.9000000000001 V577.9000000000001 M120.4 573.9000000000001 V577.9000000000001" stroke="#c0c0c0" stroke-width="0.9" fill="none"/>
<circle cx="123.9" cy="575.9000000000001" r="1.3" fill="none" stroke="#c0c0c0" stroke-width="0.8"/>
<path d="M105.3 599 V605.6 H112" stroke="#fff" stroke-width="1.1" fill="none"/>
<rect x="115.6" y="597.2" width="11" height="9.4" fill="none" stroke="#b4b4b4" stroke-width="1"/>
<path d="M116.5 601.9000000000001 H122.6 M118.6 599.9000000000001 V603.9000000000001 M120.4 599.9000000000001 V603.9000000000001" stroke="#c0c0c0" stroke-width="0.9" fill="none"/>
<circle cx="123.9" cy="601.9000000000001" r="1.3" fill="none" stroke="#c0c0c0" stroke-width="0.8"/>
<path d="M105.3 625 V631.6 H112" stroke="#fff" stroke-width="1.1" fill="none"/>
<rect x="115.2" y="622.7" width="11.8" height="10.2" rx="0.8" fill="#dfe6ee"/>
<path d="M117 625.1 H125.2 M117 627.3000000000001 H125.2 M117 629.5 H125.2 M117 631.5 H125.2" stroke="#9cb4cc" stroke-width="0.9"/>
<path d="M56.4 649.2 L66 654 L56.4 658.8 Z" fill="#fff"/>
<rect x="70.8" y="649" width="12.2" height="10" fill="#8a8a8a"/>
<rect x="70.8" y="649" width="12.2" height="2.4" fill="#d0d0d0"/>
<path d="M70.8 653.8 H83 M70.8 656.6 H83 M74.8 651.4 V659 M78.9 651.4 V659" stroke="#d0d0d0" stroke-width="0.9"/>
<rect x="71.2" y="649.4" width="11.4" height="9.2" fill="none" stroke="#c8c8c8" stroke-width="0.8"/>
<path d="M56.4 675.2 L66 680 L56.4 684.8 Z" fill="#fff"/>
<path d="M70.8 675 H75.6 L76.8 676.6 H83 V685 H70.8 Z" fill="#c4c4c4"/>
<rect x="73.6" y="678.2" width="7.4" height="5.6" fill="#555"/>
<path d="M73.6 681 H81 M77.3 678.2 V683.8" stroke="#c4c4c4" stroke-width="0.9"/>
</svg></div>
<!-- tree scrollbar -->
<div class="a" style="left:242px;top:146px;width:21px;height:569px;background:#2f2f31"></div>
<div class="a" style="left:242px;top:146px;width:21px;height:2px;background:#4a4a4e"></div>
<div class="a" style="left:242px;top:322px;width:21px;height:371px;background:#3b3b3d"></div>
<div class="a" style="left:242px;top:148px;width:21px;height:19px;background:#2c2c2e"></div>
<div class="a" style="left:242px;top:167px;width:21px;height:1px;background:#4c4c4e"></div>
<div class="a" style="left:246.6px;top:325.7px;width:12.2px;height:365.5px;background:#6d6d6d"></div>
<div class="a" style="left:242px;top:693px;width:21px;height:22px;background:#343436"></div>
<svg class="ic" style="left:245px;top:151px" width="16" height="12"><path d="M2.6 9.4 L7.8 3.6 L13 9.4" stroke="#4c4c4e" stroke-width="1.6" fill="none"/></svg>
<svg class="ic" style="left:245px;top:698px" width="16" height="12"><path d="M2.6 2.6 L7.8 8.4 L13 2.6" stroke="#606060" stroke-width="1.7" fill="none"/></svg>
<div class="a" style="left:263px;top:99px;width:1px;height:616px;background:#a0a0a0"></div>
<!-- editor -->
<div class="a" style="left:272px;top:72px;width:646px;height:31px;background:#595959"></div>
<div class="a" style="left:272px;top:72px;width:94px;height:31px;background:#62a9ec"></div>
<div class="a" style="left:272px;top:99.5px;width:646px;height:3.5px;background:#62a9ec"></div>
<div class="a" style="left:272px;top:103px;width:646px;height:26px;background:#1a1a1a"></div>
<div class="a" style="left:273.5px;top:103.5px;width:645px;height:26px;border-radius:5px 0 0 0;background:linear-gradient(#555,#3e3e3e 45%,#1e1e1e 55%,#2a2a2a)"></div>
<div class="a" style="left:272px;top:129.5px;width:646px;height:485px;background:#fff"></div>
<div class="a" style="left:272px;top:112px;width:2px;height:503px;background:#9ebcdc"></div>
<div class="a" style="left:274px;top:129.5px;width:26px;height:465px;background:#e6e6e6"></div>

<svg class="ic" style="left:277px;top:79px" width="20" height="17" viewBox="0 0 20 17">
<defs><linearGradient id="tg" x1="0" y1="0" x2="0" y2="1"><stop offset="0" stop-color="#a9cdf0"/><stop offset="1" stop-color="#c9c6c0"/></linearGradient></defs>
<rect x="0" y="0" width="20" height="16.4" rx="1.2" fill="url(#tg)"/>
<g stroke="#6aaeea" stroke-width="1.4"><path d="M2.6 3.6 H17.4"/><path d="M2.6 7 H17.4"/><path d="M2.6 10.4 H17.4"/><path d="M2.6 13.6 H17.4"/></g>
</svg>
<svg class="ic" style="left:350px;top:82px" width="13" height="13"><path d="M1.6 2 L11 11.2 M11 2 L1.6 11.2" stroke="#fff" stroke-width="1.7" fill="none"/></svg>

<div class="clip" style="clip-path:inset(129px 0 121px 300px)">
<svg class="ic" style="left:0;top:0" width="918" height="715">
<path d="M342.5 129 V594" stroke="#9c9c9c" stroke-width="1" stroke-dasharray="1 1"/>
<path d="M350 141.5 V594" stroke="#b9b9b9" stroke-width="1.8"/>
<rect x="345.1" y="136.6" width="10" height="10" fill="#fff" stroke="#c2c2c2" stroke-width="1.5"/>
<path d="M347.4 141.7 H353" stroke="#555" stroke-width="1.3"/>
<rect x="345.1" y="271.6" width="10" height="10" fill="#fff" stroke="#c2c2c2" stroke-width="1.5"/>
<path d="M347.4 276.7 H353" stroke="#555" stroke-width="1.3"/>
<rect x="345.1" y="361.6" width="10" height="10" fill="#fff" stroke="#c2c2c2" stroke-width="1.5"/>
<path d="M347.4 366.7 H353" stroke="#555" stroke-width="1.3"/>
<path d="M350 287.7 H356" stroke="#b0b0b0" stroke-width="1"/>
<path d="M350 445.5 H356" stroke="#b0b0b0" stroke-width="1"/>
</svg>
<span class="t" style='left:331.06px;top:133.6px;height:22px;line-height:22px;font-size:15px;color:#222;transform:scaleX(0.9186);transform-origin:0 50%;font-family:"Liberation Mono","DejaVu Sans Mono",monospace;'>1</span>
<span class="t" style='left:330.97px;top:156.1px;height:22px;line-height:22px;font-size:15px;color:#222;transform:scaleX(1.0395);transform-origin:0 50%;font-family:"Liberation Mono","DejaVu Sans Mono",monospace;'>2</span>
<span class="t" style='left:330.97px;top:178.6px;height:22px;line-height:22px;font-size:15px;color:#222;transform:scaleX(1.0395);transform-origin:0 50%;font-family:"Liberation Mono","DejaVu Sans Mono",monospace;'>3</span>
<span class="t" style='left:330.97px;top:201.1px;height:22px;line-height:22px;font-size:15px;color:#222;transform:scaleX(1.0395);transform-origin:0 50%;font-family:"Liberation Mono","DejaVu Sans Mono",monospace;'>4</span>
<span class="t" style='left:330.97px;top:223.6px;height:22px;line-height:22px;font-size:15px;color:#222;transform:scaleX(1.0395);transform-origin:0 50%;font-family:"Liberation Mono","DejaVu Sans Mono",monospace;'>5</span>
<span class="t" style='left:330.97px;top:246.1px;height:22px;line-height:22px;font-size:15px;color:#222;transform:scaleX(1.0395);transform-origin:0 50%;font-family:"Liberation Mono","DejaVu Sans Mono",monospace;'>6</span>
<span class="t" style='left:330.97px;top:268.6px;height:22px;line-height:22px;font-size:15px;color:#222;transform:scaleX(1.0395);transform-origin:0 50%;font-family:"Liberation Mono","DejaVu Sans Mono",monospace;'>7</span>
<span class="t" style='left:330.97px;top:291.1px;height:22px;line-height:22px;font-size:15px;color:#222;transform:scaleX(1.0395);transform-origin:0 50%;font-family:"Liberation Mono","DejaVu Sans Mono",monospace;'>8</span>
<span class="t" style='left:330.97px;top:313.6px;height:22px;line-height:22px;font-size:15px;color:#222;transform:scaleX(1.0395);transform-origin:0 50%;font-family:"Liberation Mono","DejaVu Sans Mono",monospace;'>9</span>
<span class="t" style='left:323.13px;top:336.1px;height:22px;line-height:22px;font-size:15px;color:#222;transform:scaleX(0.9518);transform-origin:0 50%;font-family:"Liberation Mono","DejaVu Sans Mono",monospace;'>10</span>
<span class="t" style='left:323.17px;top:358.6px;height:22px;line-height:22px;font-size:15px;color:#222;transform:scaleX(0.8977);transform-origin:0 50%;font-family:"Liberation Mono","DejaVu Sans Mono",monospace;'>11</span>
<span class="t" style='left:323.13px;top:381.1px;height:22px;line-height:22px;font-size:15px;color:#222;transform:scaleX(0.9518);transform-origin:0 50%;font-family:"Liberation Mono","DejaVu Sans Mono",monospace;'>12</span>
<span class="t" style='left:323.13px;top:403.6px;height:22px;line-height:22px;font-size:15px;color:#222;transform:scaleX(0.9518);transform-origin:0 50%;font-family:"Liberation Mono","DejaVu Sans Mono",monospace;'>13</span>
<span class="t" style='left:323.13px;top:426.1px;height:22px;line-height:22px;font-size:15px;color:#222;transform:scaleX(0.9518);transform-origin:0 50%;font-family:"Liberation Mono","DejaVu Sans Mono",monospace;'>14</span>
<span class="t" style='left:323.13px;top:448.6px;height:22px;line-height:22px;font-size:15px;color:#222;transform:scaleX(0.9518);transform-origin:0 50%;font-family:"Liberation Mono","DejaVu Sans Mono",monospace;'>15</span>
<span class="t" style='left:323.13px;top:471.1px;height:22px;line-height:22px;font-size:15px;color:#222;transform:scaleX(0.9518);transform-origin:0 50%;font-family:"Liberation Mono","DejaVu Sans Mono",monospace;'>16</span>
<span class="t" style='left:323.13px;top:493.6px;height:22px;line-height:22px;font-size:15px;color:#222;transform:scaleX(0.9518);transform-origin:0 50%;font-family:"Liberation Mono","DejaVu Sans Mono",monospace;'>17</span>
<span class="t" style='left:323.13px;top:516.1px;height:22px;line-height:22px;font-size:15px;color:#222;transform:scaleX(0.9518);transform-origin:0 50%;font-family:"Liberation Mono","DejaVu Sans Mono",monospace;'>18</span>
<span class="t" style='left:323.13px;top:538.6px;height:22px;line-height:22px;font-size:15px;color:#222;transform:scaleX(0.9518);transform-origin:0 50%;font-family:"Liberation Mono","DejaVu Sans Mono",monospace;'>19</span>
<span class="t" style='left:323.13px;top:561.1px;height:22px;line-height:22px;font-size:15px;color:#222;transform:scaleX(0.9518);transform-origin:0 50%;font-family:"Liberation Mono","DejaVu Sans Mono",monospace;'>20</span>
<span class="t" style='left:323.17px;top:583.6px;height:22px;line-height:22px;font-size:15px;color:#222;transform:scaleX(0.8977);transform-origin:0 50%;font-family:"Liberation Mono","DejaVu Sans Mono",monospace;'>21</span>
<span class="t" style='left:356.53px;top:130.3px;height:22px;line-height:22px;font-size:18.4px;color:#1818b4;transform:scaleX(0.8623);transform-origin:0 50%;font-family:"Liberation Sans","Noto Sans CJK SC",sans-serif;'>IF </span>
<span class="t" style='left:375.88px;top:130.3px;height:22px;line-height:22px;font-size:18.4px;color:#1c1c1c;transform:scaleX(0.8906);transform-origin:0 50%;font-family:"Liberation Sans","Noto Sans CJK SC",sans-serif;'>Enable  </span>
<span class="t" style='left:436.86px;top:130.3px;height:22px;line-height:22px;font-size:18.4px;color:#1818b4;transform:scaleX(0.8609);transform-origin:0 50%;font-family:"Liberation Sans","Noto Sans CJK SC",sans-serif;'>THEN</span>
<span class="t" style='left:396.55px;top:197.8px;height:22px;line-height:22px;font-size:20.5px;color:#2b8a2b;transform:scaleX(1.1667);transform-origin:0 50%;font-family:"Liberation Sans","Noto Sans CJK SC",sans-serif;'>//</span>
<span class="t" style='left:411.70px;top:198.1px;height:22px;line-height:22px;font-size:16.8px;color:#2b8a2b;letter-spacing:0.100px;font-family:"Liberation Sans","Noto Sans CJK SC",sans-serif;'>伺服使能</span>
<span class="t" style='left:395.77px;top:220.3px;height:22px;line-height:22px;font-size:18.4px;color:#1c1c1c;transform:scaleX(0.8960);transform-origin:0 50%;font-family:"Liberation Sans","Noto Sans CJK SC",sans-serif;'>MC_Power_instance(Axis:=MC_Axis);</span>
<span class="t" style='left:395.77px;top:242.8px;height:22px;line-height:22px;font-size:18.4px;color:#1c1c1c;transform:scaleX(0.8968);transform-origin:0 50%;font-family:"Liberation Sans","Noto Sans CJK SC",sans-serif;'>MC_Power_instance.Enable:=((</span>
<span class="t" style='left:629.06px;top:242.8px;height:22px;line-height:22px;font-size:18.4px;color:#1818b4;transform:scaleX(0.9126);transform-origin:0 50%;font-family:"Liberation Sans","Noto Sans CJK SC",sans-serif;'>NOT </span>
<span class="t" style='left:668.87px;top:242.8px;height:22px;line-height:22px;font-size:18.4px;color:#1c1c1c;transform:scaleX(0.8996);transform-origin:0 50%;font-family:"Liberation Sans","Noto Sans CJK SC",sans-serif;'>UDT_IF.HMICmd.ServoOn  </span>
<span class="t" style='left:874.78px;top:242.8px;height:22px;line-height:22px;font-size:18.4px;color:#1818b4;transform:scaleX(0.9214);transform-origin:0 50%;font-family:"Liberation Sans","Noto Sans CJK SC",sans-serif;'>AND </span>
<span class="t" style='left:914.37px;top:242.8px;height:22px;line-height:22px;font-size:18.4px;color:#1c1c1c;transform:scaleX(0.9000);transform-origin:0 50%;font-family:"Liberation Sans","Noto Sans CJK SC",sans-serif;'>Mode.Auto</span>
<span class="t" style='left:400.19px;top:265.3px;height:22px;line-height:22px;font-size:18.4px;color:#1818b4;transform:scaleX(0.8297);transform-origin:0 50%;font-family:"Liberation Sans","Noto Sans CJK SC",sans-serif;'>IF </span>
<span class="t" style='left:418.72px;top:265.3px;height:22px;line-height:22px;font-size:18.4px;color:#1c1c1c;transform:scaleX(0.9706);transform-origin:0 50%;font-family:"Liberation Sans","Noto Sans CJK SC",sans-serif;'>Mode.Auto </span>
<span class="t" style='left:510.96px;top:265.3px;height:22px;line-height:22px;font-size:18.4px;color:#1818b4;transform:scaleX(0.8716);transform-origin:0 50%;font-family:"Liberation Sans","Noto Sans CJK SC",sans-serif;'>THEN </span>
<span class="t" style='left:558.17px;top:265.3px;height:22px;line-height:22px;font-size:18.4px;color:#1c1c1c;transform:scaleX(0.9027);transform-origin:0 50%;font-family:"Liberation Sans","Noto Sans CJK SC",sans-serif;'>UDT_IF.HMICmd.ServoOn:=</span>
<span class="t" style='left:769.04px;top:265.3px;height:22px;line-height:22px;font-size:18.4px;color:#1818b4;transform:scaleX(0.8000);transform-origin:0 50%;font-family:"Liberation Sans","Noto Sans CJK SC",sans-serif;'>FALSE</span>
<span class="t" style='left:813.87px;top:265.3px;height:22px;line-height:22px;font-size:18.4px;color:#1c1c1c;transform:scaleX(0.9000);transform-origin:0 50%;font-family:"Liberation Sans","Noto Sans CJK SC",sans-serif;'>;</span>
<span class="t" style='left:818.72px;top:265.3px;height:22px;line-height:22px;font-size:18.4px;color:#1818b4;transform:scaleX(0.8333);transform-origin:0 50%;font-family:"Liberation Sans","Noto Sans CJK SC",sans-serif;'>END_IF</span>
<span class="t" style='left:872.27px;top:265.3px;height:22px;line-height:22px;font-size:18.4px;color:#1c1c1c;transform:scaleX(0.9000);transform-origin:0 50%;font-family:"Liberation Sans","Noto Sans CJK SC",sans-serif;'>;</span>
<span class="t" style='left:396.55px;top:332.8px;height:22px;line-height:22px;font-size:20.5px;color:#2b8a2b;transform:scaleX(1.1667);transform-origin:0 50%;font-family:"Liberation Sans","Noto Sans CJK SC",sans-serif;'>//</span>
<span class="t" style='left:411.70px;top:333.1px;height:22px;line-height:22px;font-size:16.8px;color:#2b8a2b;letter-spacing:0.500px;font-family:"Liberation Sans","Noto Sans CJK SC",sans-serif;'>伺服带参数回零</span>
<span class="t" style='left:394.83px;top:355.3px;height:22px;line-height:22px;font-size:18.4px;color:#1818b4;transform:scaleX(0.8623);transform-origin:0 50%;font-family:"Liberation Sans","Noto Sans CJK SC",sans-serif;'>IF </span>
<span class="t" style='left:414.15px;top:355.3px;height:22px;line-height:22px;font-size:18.4px;color:#1c1c1c;transform:scaleX(0.9259);transform-origin:0 50%;font-family:"Liberation Sans","Noto Sans CJK SC",sans-serif;'>MC_HomeWithParameterAuto_instance.Done </span>
<span class="t" style='left:767.17px;top:355.3px;height:22px;line-height:22px;font-size:18.4px;color:#1818b4;transform:scaleX(0.8929);transform-origin:0 50%;font-family:"Liberation Sans","Noto Sans CJK SC",sans-serif;'>OR </span>
<span class="t" style='left:796.37px;top:355.3px;height:22px;line-height:22px;font-size:18.4px;color:#1c1c1c;transform:scaleX(0.9000);transform-origin:0 50%;font-family:"Liberation Sans","Noto Sans CJK SC",sans-serif;'>MC_HomeWithParameterManual_instance.Done</span>
<span class="t" style='left:414.86px;top:377.8px;height:22px;line-height:22px;font-size:18.4px;color:#1c1c1c;transform:scaleX(0.9196);transform-origin:0 50%;font-family:"Liberation Sans","Noto Sans CJK SC",sans-serif;'>UDT_IF.AutoCmd.Home:=</span>
<span class="t" style='left:611.85px;top:377.8px;height:22px;line-height:22px;font-size:18.4px;color:#1818b4;transform:scaleX(0.7860);transform-origin:0 50%;font-family:"Liberation Sans","Noto Sans CJK SC",sans-serif;'>FALSE</span>
<span class="t" style='left:655.87px;top:377.8px;height:22px;line-height:22px;font-size:18.4px;color:#1c1c1c;transform:scaleX(0.9000);transform-origin:0 50%;font-family:"Liberation Sans","Noto Sans CJK SC",sans-serif;'>;</span>
<span class="t" style='left:414.86px;top:400.3px;height:22px;line-height:22px;font-size:18.4px;color:#1c1c1c;transform:scaleX(0.9127);transform-origin:0 50%;font-family:"Liberation Sans","Noto Sans CJK SC",sans-serif;'>HomeOK_I:=</span>
<span class="t" style='left:512.44px;top:400.3px;height:22px;line-height:22px;font-size:18.4px;color:#1818b4;transform:scaleX(0.8035);transform-origin:0 50%;font-family:"Liberation Sans","Noto Sans CJK SC",sans-serif;'>FALSE</span>
<span class="t" style='left:557.47px;top:400.3px;height:22px;line-height:22px;font-size:18.4px;color:#1c1c1c;transform:scaleX(0.9000);transform-origin:0 50%;font-family:"Liberation Sans","Noto Sans CJK SC",sans-serif;'>;</span>
<span class="t" style='left:395.72px;top:422.8px;height:22px;line-height:22px;font-size:18.4px;color:#1818b4;transform:scaleX(0.8333);transform-origin:0 50%;font-family:"Liberation Sans","Noto Sans CJK SC",sans-serif;'>END_IF</span>
<span class="t" style='left:449.27px;top:422.8px;height:22px;line-height:22px;font-size:18.4px;color:#1c1c1c;transform:scaleX(0.9000);transform-origin:0 50%;font-family:"Liberation Sans","Noto Sans CJK SC",sans-serif;'>;</span>
<span class="t" style='left:395.75px;top:445.3px;height:22px;line-height:22px;font-size:18.4px;color:#1c1c1c;transform:scaleX(0.9228);transform-origin:0 50%;font-family:"Liberation Sans","Noto Sans CJK SC",sans-serif;'>MC_HomeWithParameterManual_instance</span>
<span class="t" style='left:718.37px;top:445.3px;height:22px;line-height:22px;font-size:18.4px;color:#1c1c1c;transform:scaleX(0.8988);transform-origin:0 50%;font-family:"Liberation Sans","Noto Sans CJK SC",sans-serif;'>(Axis:=MC_Axis,</span>
<span class="t" style='left:840.07px;top:445.3px;height:22px;line-height:22px;font-size:18.4px;color:#1c1c1c;transform:scaleX(0.9000);transform-origin:0 50%;font-family:"Liberation Sans","Noto Sans CJK SC",sans-serif;'>HomingParameter:=HomePara</span>
<span class="t" style='left:395.75px;top:467.8px;height:22px;line-height:22px;font-size:18.4px;color:#1c1c1c;transform:scaleX(0.9236);transform-origin:0 50%;font-family:"Liberation Sans","Noto Sans CJK SC",sans-serif;'>MC_HomeWithParameterAuto_instance</span>
<span class="t" style='left:697.87px;top:467.8px;height:22px;line-height:22px;font-size:18.4px;color:#1c1c1c;transform:scaleX(0.8973);transform-origin:0 50%;font-family:"Liberation Sans","Noto Sans CJK SC",sans-serif;'>(Axis:=MC_Axis,</span>
<span class="t" style='left:819.37px;top:467.8px;height:22px;line-height:22px;font-size:18.4px;color:#1c1c1c;transform:scaleX(0.9000);transform-origin:0 50%;font-family:"Liberation Sans","Noto Sans CJK SC",sans-serif;'>HomingParameter:=HomePara</span>
<span class="t" style='left:395.75px;top:490.3px;height:22px;line-height:22px;font-size:18.4px;color:#1c1c1c;transform:scaleX(0.9345);transform-origin:0 50%;font-family:"Liberation Sans","Noto Sans CJK SC",sans-serif;'>HomePara.Compensation:=Data.HomeOffset;</span>
<span class="t" style='left:395.75px;top:512.8px;height:22px;line-height:22px;font-size:18.4px;color:#1c1c1c;transform:scaleX(0.9232);transform-origin:0 50%;font-family:"Liberation Sans","Noto Sans CJK SC",sans-serif;'>HomePara.HomeInput:=_mcExternalSignal;</span>
<span class="t" style='left:395.75px;top:535.3px;height:22px;line-height:22px;font-size:18.4px;color:#1c1c1c;transform:scaleX(0.9230);transform-origin:0 50%;font-family:"Liberation Sans","Noto Sans CJK SC",sans-serif;'>HomePara.PosiLmtMode:=_mcRevImmediateStop;</span>
<span class="t" style='left:395.75px;top:557.8px;height:22px;line-height:22px;font-size:18.4px;color:#1c1c1c;transform:scaleX(0.9306);transform-origin:0 50%;font-family:"Liberation Sans","Noto Sans CJK SC",sans-serif;'>HomePara.NegaLmtMode:=_mcRevImmediateStop;</span>
<span class="t" style='left:395.76px;top:580.3px;height:22px;line-height:22px;font-size:18.4px;color:#1c1c1c;transform:scaleX(0.9129);transform-origin:0 50%;font-family:"Liberation Sans","Noto Sans CJK SC",sans-serif;'>HomePara.Acc:=3000;</span>
</div>
<!-- h scrollbar -->
<div class="a" style="left:274px;top:594.5px;width:644px;height:18px;background:#9a9a9a"></div>
<div class="a" style="left:272px;top:594.5px;width:24px;height:18px;background:#e4e6e8"></div>
<div class="a" style="left:276px;top:595px;width:18px;height:17.5px;background:#2e2e2e"></div>
<div class="a" style="left:296.5px;top:598px;width:272.5px;height:10.5px;background:#b1b1b1"></div>
<svg class="ic" style="left:279px;top:597px" width="12" height="14"><path d="M9 2 L3 7 L9 12" stroke="#6c6c6c" stroke-width="1.6" fill="none"/></svg>
<div class="a" style="left:349.2px;top:594px;width:1.7px;height:9.5px;background:#a4a4a4"></div>
<div class="a" style="left:272px;top:612.4px;width:646px;height:2px;background:#f2f4f6"></div>
<div class="a" style="left:272px;top:614.4px;width:646px;height:1.8px;background:linear-gradient(#8794a2,#222a32)"></div>
<div class="a" style="left:264px;top:616px;width:654px;height:8.5px;background:#000"></div>
<!-- bottom panel -->
<div class="a" style="left:272px;top:624.5px;width:646px;height:26px;background:linear-gradient(#4e4e4e,#444 30%,#2a2a2a 46%,#2f2f2f)"></div>
<div class="a" style="left:272px;top:650.5px;width:646px;height:65px;background:#4a4a4e"></div>
<div class="a" style="left:276px;top:679.5px;width:642px;height:19px;background:#37373b"></div>
<svg class="ic" style="left:317.5px;top:635.2px" width="601" height="6.9"><defs><pattern id="d2" width="5" height="5.6" patternUnits="userSpaceOnUse"><rect x="0" y="0" width="1.1" height="1.3" fill="#a2a2a2"/><rect x="2.5" y="2.8" width="1.1" height="1.3" fill="#6e6e6e"/><rect x="0" y="2.8" width="1.1" height="1.3" fill="#161616"/></pattern></defs><rect width="601" height="6.9" fill="url(#d2)"/></svg>
<div class="a" style="left:277px;top:654.5px;width:79px;height:20px;background:#6aaff0;box-shadow:inset 0 0 0 1px #15202c"></div>
<div class="a" style="left:364px;top:654.5px;width:79px;height:20px;background:#6aaff0;box-shadow:inset 0 0 0 1px #15202c"></div>
<svg class="ic" style="left:276px;top:654px" width="22" height="22" viewBox="0 0 22 22">
<defs><radialGradient id="rg" cx="0.4" cy="0.3" r="0.8"><stop offset="0" stop-color="#f0504a"/><stop offset="1" stop-color="#c01414"/></radialGradient></defs>
<circle cx="11.2" cy="11" r="9.6" fill="url(#rg)" stroke="#a01010" stroke-width="0.6"/>
<path d="M6.8 6.6 L15.6 15.4 M15.6 6.6 L6.8 15.4" stroke="#fff" stroke-width="2.8"/>
</svg>
<svg class="ic" style="left:363px;top:654px" width="22" height="22" viewBox="0 0 22 22">
<path d="M10.2 1.6 L19.6 19.6 H0.8 Z" fill="#ffe11a" stroke="#b89a10" stroke-width="0.8" stroke-linejoin="round"/>
<path d="M9.1 7 H11.3 L10.8 14 H9.6 Z" fill="#111"/><circle cx="10.2" cy="16.6" r="1.3" fill="#111"/>
</svg>
<div class="a" style="left:306px;top:683px;width:2px;height:11px;background:#fff"></div>
<div class="a" style="left:344px;top:683px;width:1px;height:11px;background:#e8e8e8"></div>
<div class="a" style="left:593.5px;top:683px;width:1px;height:11px;background:#e8e8e8"></div>
<div class="a" style="left:719px;top:683px;width:1px;height:11px;background:#e8e8e8"></div>
<div class="a" style="left:905.5px;top:683px;width:2px;height:11px;background:#fff"></div>

<span class="t" style='left:20.10px;top:75.5px;height:20px;line-height:20px;font-size:14px;color:#fff;letter-spacing:1.320px;'>多檢視瀏覽器</span>
<span class="t" style='left:27.10px;top:113.5px;height:20px;line-height:20px;font-size:14px;color:#fff;letter-spacing:1.800px;font-family:"Liberation Sans","Noto Sans CJK SC",sans-serif;'>拉胶管</span>
<span class="t" style='left:301.84px;top:76.7px;height:22px;line-height:22px;font-size:15.5px;color:#fff;transform:scaleX(0.8045);transform-origin:0 50%;'>FB_SV</span>
<span class="t" style='left:303.50px;top:106px;height:19px;line-height:19px;font-size:13.6px;color:#fff;letter-spacing:3.200px;'>變數</span>
<span class="t" style='left:279.60px;top:628.8px;height:19px;line-height:19px;font-size:13.6px;color:#fff;letter-spacing:0.900px;'>編譯</span>
<span class="t" style='left:304.27px;top:653.9px;height:21px;line-height:21px;font-size:15px;color:#2d5cae;transform:scaleX(0.9070);transform-origin:0 50%;'>0</span>
<span class="t" style='left:321.00px;top:654.9px;height:19px;line-height:19px;font-size:13.8px;color:#2d5cae;letter-spacing:2.500px;'>錯誤</span>
<span class="t" style='left:391.27px;top:653.9px;height:21px;line-height:21px;font-size:15px;color:#2d5cae;transform:scaleX(0.9070);transform-origin:0 50%;'>0</span>
<span class="t" style='left:408.10px;top:654.9px;height:19px;line-height:19px;font-size:13.8px;color:#2d5cae;letter-spacing:1.600px;'>警告</span>
<span class="t" style='left:454.60px;top:679.3px;height:19px;line-height:19px;font-size:13.8px;color:#fff;letter-spacing:2.500px;'>說明</span>
<span class="t" style='left:642.90px;top:679.3px;height:19px;line-height:19px;font-size:13.8px;color:#fff;letter-spacing:1.500px;'>程式</span>
<span class="t" style='left:798.30px;top:679.3px;height:19px;line-height:19px;font-size:13.8px;color:#fff;letter-spacing:2.800px;'>位置</span>
</body></html>
